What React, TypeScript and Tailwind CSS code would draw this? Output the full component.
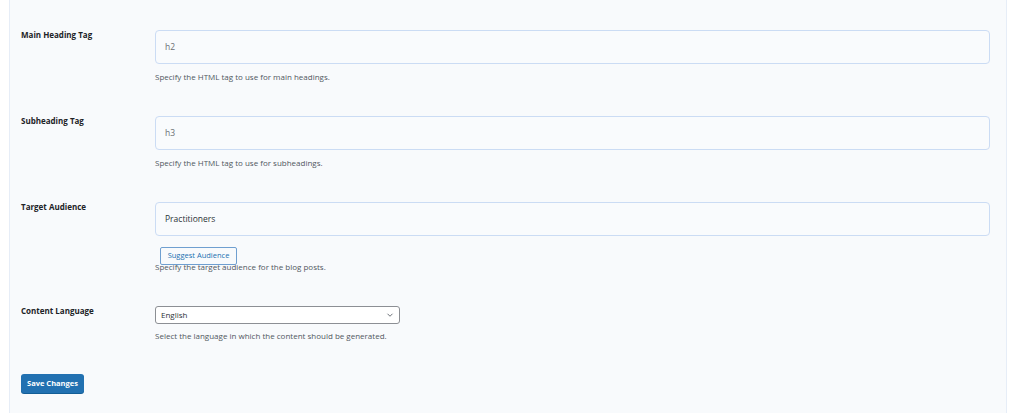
import React from 'react'

const font = { fontFamily: '"Open Sans", "Noto Sans", Arial, sans-serif' }

function TextRow({
  label,
  value,
  hint,
  dark,
  children,
}: {
  label: string
  value: string
  hint: string
  dark?: boolean
  children?: React.ReactNode
}) {
  return (
    <div className="mb-[33px] flex">
      <div className="-mt-[1px] w-[134px] text-[8px] leading-[12px] font-bold text-[#1d2327]">{label}</div>
      <div className="flex-1">
        <div
          className={`flex h-[34px] items-center rounded-[4px] border border-[#cbdcf4] bg-[#f9fbfd] px-[9px] text-[8.5px] ${
            dark ? 'text-[#2c3338]' : 'text-[#6b6f74]'
          }`}
        >
          {value}
        </div>
        {children}
        <p className={`${children ? '-mt-[4px]' : 'mt-[7px]'} text-[8px] leading-[12px] text-[#50575e]`}>{hint}</p>
      </div>
    </div>
  )
}

export default function App() {
  return (
    <div className="h-[413px] w-[1024px] overflow-hidden bg-white" style={font}>
      <div className="ml-[9px] h-full w-[998px] border-x border-[#e6edf7] bg-[#f8fafc] pl-[11px] pr-[16px] pt-[30px]">
        <TextRow hint="Specify the HTML tag to use for main headings." label="Main Heading Tag" value="h2" />
        <TextRow hint="Specify the HTML tag to use for subheadings." label="Subheading Tag" value="h3" />
        <TextRow dark hint="Specify the target audience for the blog posts." label="Target Audience" value="Practitioners">
          <button
            className="ml-[5px] mt-[11px] h-[18px] w-[77px] rounded-[2px] border border-[#6f9fd0] bg-[#f8fafc] text-[7.5px] leading-none text-[#2271b1]"
            type="button"
          >
            Suggest Audience
          </button>
        </TextRow>

        <div className="flex">
          <div className="-mt-[1px] w-[134px] text-[8px] leading-[12px] font-bold text-[#1d2327]">Content Language</div>
          <div className="flex-1">
            <div className="flex h-[18px] w-[245px] items-center justify-between rounded-[3px] border border-[#8c8f94] bg-white pl-[5px] pr-[4px] text-[8px] text-[#2c3338]">
              <span>English</span>
              <svg className="h-[10px] w-[10px] text-[#50575e]" fill="none" stroke="currentColor" strokeWidth="2" viewBox="0 0 24 24">
                <path d="M6 9l6 6 6-6" />
              </svg>
            </div>
            <p className="mt-[6px] text-[8px] leading-[12px] text-[#50575e]">
              Select the language in which the content should be generated.
            </p>
          </div>
        </div>

        <button
          className="mt-[32px] h-[19px] w-[63px] rounded-[3px] bg-[#2271b1] text-[7.5px] leading-none font-bold text-white shadow-[0_1px_0_#135e96]"
          type="button"
        >
          Save Changes
        </button>
      </div>
    </div>
  )
}
